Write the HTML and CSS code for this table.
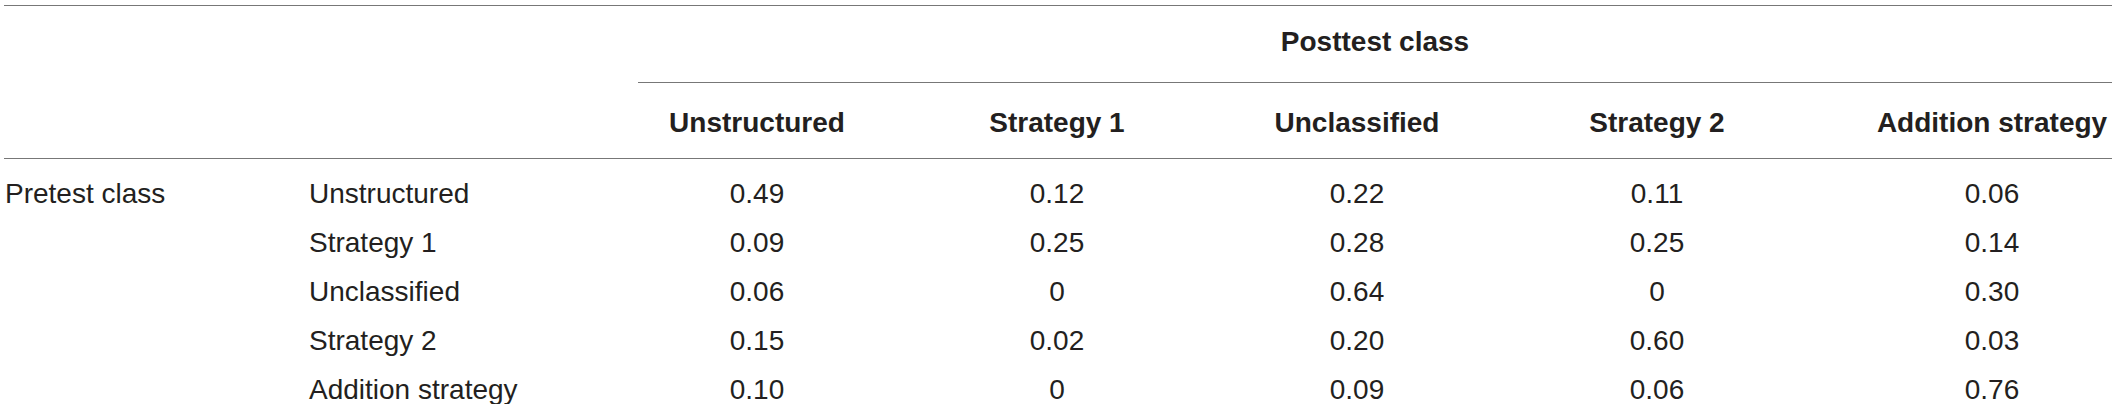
FILE: index.html
```html
<!DOCTYPE html>
<html lang="en">
<head>
<meta charset="utf-8">
<title>Pretest vs Posttest class</title>
<link rel="stylesheet" href="styles.css">
</head>
<body>
<table class="ctab">
  <colgroup>
    <col class="c1"><col class="c2"><col class="c3"><col class="c4"><col class="c5"><col class="c6"><col class="c7">
  </colgroup>
  <thead>
    <tr class="h1">
      <th></th>
      <th></th>
      <th colspan="5" class="span"><div class="span-in">Posttest class</div></th>
    </tr>
    <tr class="h2">
      <th></th>
      <th></th>
      <th class="num">Unstructured</th>
      <th class="num">Strategy 1</th>
      <th class="num">Unclassified</th>
      <th class="num">Strategy 2</th>
      <th class="num last">Addition strategy</th>
    </tr>
  </thead>
  <tbody>
    <tr class="first">
      <td class="lab">Pretest class</td>
      <td class="lab">Unstructured</td>
      <td class="num">0.49</td><td class="num">0.12</td><td class="num">0.22</td><td class="num">0.11</td><td class="num last">0.06</td>
    </tr>
    <tr>
      <td class="lab"></td>
      <td class="lab">Strategy 1</td>
      <td class="num">0.09</td><td class="num">0.25</td><td class="num">0.28</td><td class="num">0.25</td><td class="num last">0.14</td>
    </tr>
    <tr>
      <td class="lab"></td>
      <td class="lab">Unclassified</td>
      <td class="num">0.06</td><td class="num">0</td><td class="num">0.64</td><td class="num">0</td><td class="num last">0.30</td>
    </tr>
    <tr>
      <td class="lab"></td>
      <td class="lab">Strategy 2</td>
      <td class="num">0.15</td><td class="num">0.02</td><td class="num">0.20</td><td class="num">0.60</td><td class="num last">0.03</td>
    </tr>
    <tr>
      <td class="lab"></td>
      <td class="lab">Addition strategy</td>
      <td class="num">0.10</td><td class="num">0</td><td class="num">0.09</td><td class="num">0.06</td><td class="num last">0.76</td>
    </tr>
  </tbody>
</table>
</body>
</html>
```

FILE: styles.css
```css
html, body {
  margin: 0;
  padding: 0;
  background: #ffffff;
}
body {
  padding: 5px 5px 0 4px;
  font-family: "Liberation Sans", Arial, sans-serif;
  font-size: 28px;
  line-height: 32px;
  color: #231f20;
}
.ctab {
  width: 2108px;
  table-layout: fixed;
  border-collapse: collapse;
  border-top: 1px solid #777777;
}
.c1 { width: 304px; }
.c2 { width: 299px; }
.c3 { width: 300px; }
.c4 { width: 300px; }
.c5 { width: 300px; }
.c6 { width: 300px; }
.c7 { width: 305px; }

th, td {
  padding: 0;
  white-space: nowrap;
}
th {
  font-weight: bold;
}
.h1 th {
  padding: 0;
  vertical-align: bottom;
}
.span-in {
  margin-left: 31px;
  padding: 20px 0 24px;
  border-bottom: 1px solid #777777;
  text-align: center;
}
.h2 th {
  padding: 24px 0 19px;
  border-bottom: 1px solid #777777;
}
td {
  font-weight: normal;
  padding: 9px 0 8px;
}
tr.first td {
  padding-top: 19px;
}
.lab {
  text-align: left;
  padding-left: 1px;
}
.num {
  text-align: center;
}
.num.last {
  padding-left: 65px;
}
```
